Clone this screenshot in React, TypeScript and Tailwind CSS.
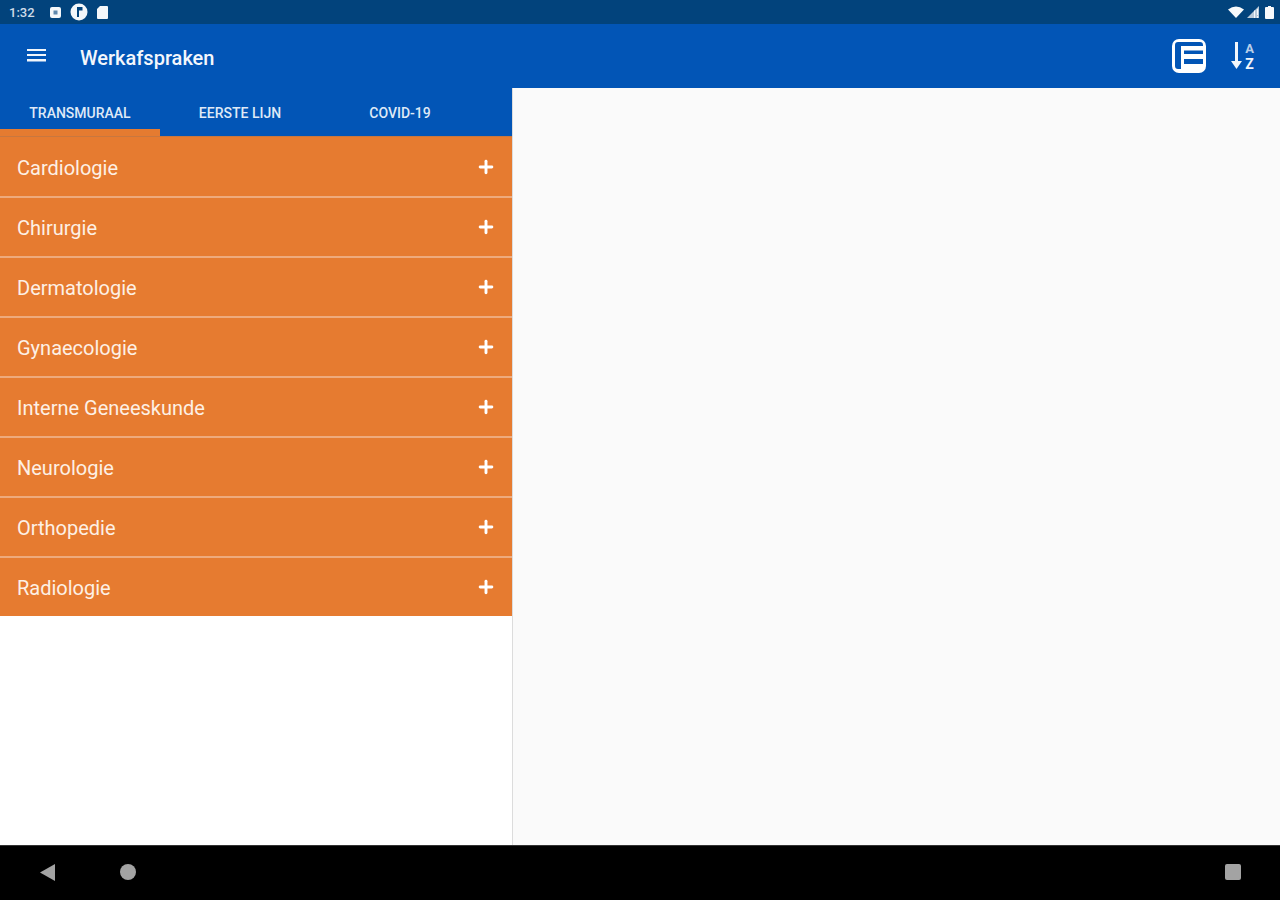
import { Plus } from 'lucide-react';

const specialties = [
  'Cardiologie',
  'Chirurgie',
  'Dermatologie',
  'Gynaecologie',
  'Interne Geneeskunde',
  'Neurologie',
  'Orthopedie',
  'Radiologie',
];

const tabs = ['Transmuraal', 'Eerste lijn', 'Covid-19'];

function StatusBar() {
  return (
    <div className="flex h-6 items-center justify-between bg-[#02437c] pl-[9px] pr-[6px]">
      <div className="flex items-center gap-[8px]">
        <span className="w-[27px] text-[13px] font-medium leading-none text-[#cfdce8]">1:32</span>
        <svg width="13" height="13" viewBox="0 0 13 13" className="ml-[5px]">
          <rect x="1" y="1" width="11" height="11" rx="2" fill="#f4f7fa" />
          <rect x="4.500" y="4.500" width="4" height="4" fill="#5f88ad" />
        </svg>
        <svg width="18" height="18" viewBox="0 0 18 18">
          <circle cx="9" cy="9" r="8.500" fill="#f4f7fa" />
          <path d="M7 4h2v10H7zM9 4h3.500v3.500H9z" fill="#02437c" />
        </svg>
        <svg width="13" height="15" viewBox="0 0 13 15">
          <path d="M4 1h7a1 1 0 0 1 1 1v11a1 1 0 0 1-1 1H2a1 1 0 0 1-1-1V4z" fill="#f4f7fa" />
        </svg>
      </div>
      <div className="flex items-center gap-[3px]">
        <svg width="16" height="12" viewBox="0 0 16 12">
          <path d="M0 3.500Q8-2.500 16 3.500L8 12z" fill="#f7f9fb" />
        </svg>
        <svg width="12" height="12" viewBox="0 0 12 12">
          <path d="M12 0v12H0z" fill="#b9c9d8" />
          <path d="M8 4v8H7V5zM10 3h1v6h-1zM10 10h1v2h-1z" fill="#f7f9fb" />
        </svg>
        <svg width="9" height="13" viewBox="0 0 9 13" className="ml-[3px]">
          <path d="M3 0h3v1h2a1 1 0 0 1 1 1v10a1 1 0 0 1-1 1H1a1 1 0 0 1-1-1V2a1 1 0 0 1 1-1h2z" fill="#f7f9fb" />
        </svg>
      </div>
    </div>
  );
}

function AppBar() {
  return (
    <div className="flex h-16 items-center bg-[#0255b6] pl-[27px] pr-[24px]">
      <svg width="19" height="15" viewBox="0 0 19 15" className="-mt-[1px]">
        <path d="M0 1h19v2H0zM0 6h19v2H0zM0 11h19v2.500H0z" fill="#f2f6fb" />
      </svg>
      <h1 className="ml-[34px] mt-[3px] text-xl font-medium leading-none text-[#f4f7fc]">Werkafspraken</h1>
      <div className="ml-auto flex items-center gap-[24px]">
        <svg width="34" height="34" viewBox="0 0 34 34">
          <rect width="34" height="34" rx="7" fill="#fff" />
          <path d="M6 3h22a3 3 0 0 1 3 3v1H9v23H6a3 3 0 0 1-3-3V6a3 3 0 0 1 3-3z" fill="#0255b6" />
          <path d="M12 11.500h19v3.500H12zM12 20h19v5H12z" fill="#0255b6" />
        </svg>
        <svg width="26" height="30" viewBox="0 0 26 30">
          <path d="M5 1h3v21H5z" fill="#f2f6fb" />
          <path d="M1 20h11l-5.500 8z" fill="#f2f6fb" />
          <text x="19.500" y="12" textAnchor="middle" fontFamily="Roboto, sans-serif" fontWeight="700" fontSize="13" fill="#b9cfe9">A</text>
          <text x="19.500" y="28" textAnchor="middle" fontFamily="Roboto, sans-serif" fontWeight="700" fontSize="14" fill="#f2f6fb">Z</text>
        </svg>
      </div>
    </div>
  );
}

function Tabs() {
  return (
    <div className="flex h-12 bg-[#0255b6]">
      {tabs.map((tab, i) => (
        <div
          key={tab}
          className={`flex w-40 items-center justify-center border-b-[7px] pt-[9px] text-sm font-medium uppercase leading-none text-[#dfe9f6] ${
            i === 0 ? 'border-[#e57b30]' : 'border-transparent'
          }`}
        >
          {tab}
        </div>
      ))}
    </div>
  );
}

export default function App() {
  return (
    <div className="flex h-[900px] w-[1280px] flex-col overflow-hidden bg-white font-['Roboto',sans-serif]">
      <StatusBar />
      <AppBar />
      <div className="flex min-h-0 flex-1">
        <div className="w-[512px] shrink-0">
          <Tabs />
          <ul className="border-t border-[#c8773f] bg-[#e67b30] pt-[1px]">
            {specialties.map((name, i) => (
              <li
                key={name}
                className={`flex items-center justify-between pl-[17px] pr-[16px] text-xl leading-none text-[#fdf0e5] ${
                  i < specialties.length - 1 ? 'h-[60px] border-b-2 border-[#eeaa7c]' : 'h-[58px]'
                }`}
              >
                <span className="mt-[2px]">{name}</span>
                <Plus size={20} strokeWidth={3.5} className="text-white" />
              </li>
            ))}
          </ul>
        </div>
        <div className="flex-1 border-l border-[#dcdcdc] bg-[#fafafa]" />
      </div>
      <div className="flex h-[55px] items-center border-t border-[#333] bg-black pl-[40px] pr-[39px]">
        <svg width="16" height="17" viewBox="0 0 16 17" className="-mt-[2px]">
          <path d="M0 8.500 15 0v17z" fill="#a3a3a3" />
        </svg>
        <div className="-mt-[2px] ml-[64px] h-[16px] w-[16px] rounded-full bg-[#a3a3a3]" />
        <div className="-mt-[2px] ml-auto h-[16px] w-[16px] rounded-[2px] bg-[#a3a3a3]" />
      </div>
    </div>
  );
}
